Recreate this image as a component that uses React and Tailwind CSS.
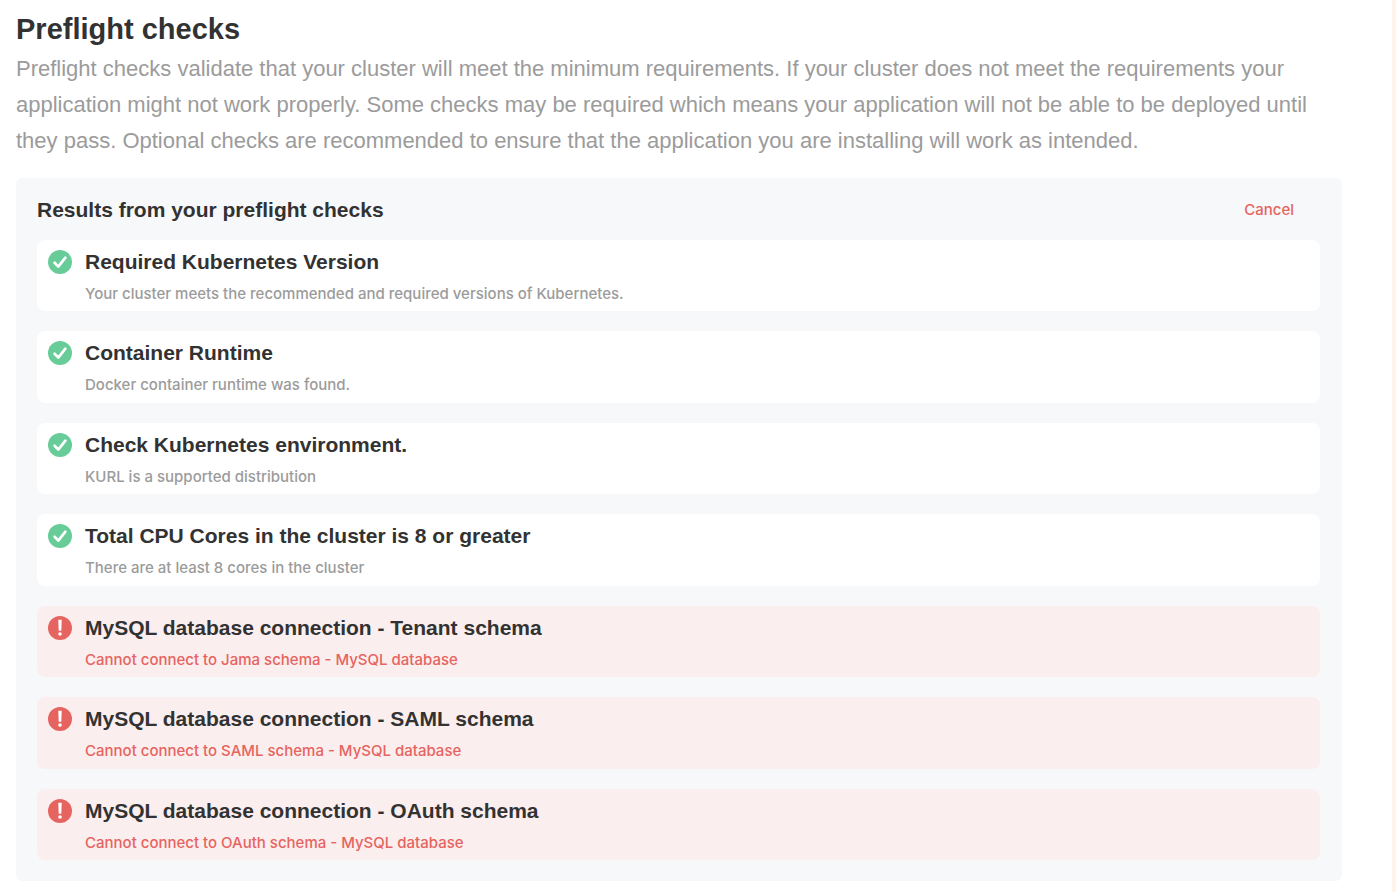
const checks = [
  { title: "Required Kubernetes Version", message: "Your cluster meets the recommended and required versions of Kubernetes.", passed: true },
  { title: "Container Runtime", message: "Docker container runtime was found.", passed: true },
  { title: "Check Kubernetes environment.", message: "KURL is a supported distribution", passed: true },
  { title: "Total CPU Cores in the cluster is 8 or greater", message: "There are at least 8 cores in the cluster", passed: true },
  { title: "MySQL database connection - Tenant schema", message: "Cannot connect to Jama schema - MySQL database", passed: false },
  { title: "MySQL database connection - SAML schema", message: "Cannot connect to SAML schema - MySQL database", passed: false },
  { title: "MySQL database connection - OAuth schema", message: "Cannot connect to OAuth schema - MySQL database", passed: false },
];

function StatusIcon({ passed }) {
  return passed ? (
    <svg className="mt-[10px] size-6 shrink-0" viewBox="0 0 24 24" role="img" aria-label="Passed">
      <circle cx="12" cy="12" r="12" fill="#68cc98" />
      <path d="M6.6 12.8 10.3 16.6 17.4 7.7" fill="none" stroke="#fff" strokeWidth="2.7" strokeLinecap="round" strokeLinejoin="round" />
    </svg>
  ) : (
    <svg className="mt-[10px] size-6 shrink-0" viewBox="0 0 24 24" role="img" aria-label="Failed">
      <circle cx="12" cy="12" r="12" fill="#e66460" />
      <path d="M10.3 3.8h3.4l-.4 11h-2.6z" fill="#fff" />
      <circle cx="12" cy="18" r="1.8" fill="#fff" />
    </svg>
  );
}

function CheckRow({ title, message, passed }) {
  return (
    <li className={`flex gap-[13px] rounded-lg px-[11px] ${passed ? "bg-white" : "bg-[#fbeeee]"}`}>
      <StatusIcon passed={passed} />
      <div className="pt-[9px]">
        <h3 className="text-[21px] leading-[26px] font-bold text-[#323232]">{title}</h3>
        <p className={`mt-2 font-['Inter','Liberation_Sans',sans-serif] text-[15px] leading-[22px] font-medium ${passed ? "text-[#9b9b9b]" : "text-[#e66460]"}`}>{message}</p>
      </div>
    </li>
  );
}

export default function App() {
  return (
    <main className="min-h-screen border-r-4 border-[#fff4ea] bg-white pt-3 pr-[50px] pb-[11px] pl-4 font-['Liberation_Sans',Arial,sans-serif]">
      <h1 className="text-[29px] leading-[34px] font-bold text-[#323232]">Preflight checks</h1>
      <p className="mt-[5px] text-[22px] leading-9 text-[#9b9b9b]">
        Preflight checks validate that your cluster will meet the minimum requirements. If your cluster does not meet the requirements your application might not work properly. Some checks may be required which means your application will not be able to be deployed until they pass. Optional checks are recommended to ensure that the application you are installing will work as intended.
      </p>
      <section className="mt-[19px] rounded-md bg-[#f7f8fa] pt-[19px] pr-[22px] pb-[21px] pl-[21px]">
        <div className="flex items-center justify-between pr-[26px]">
          <h2 className="text-[21px] leading-[26px] font-bold text-[#323232]">Results from your preflight checks</h2>
          <button type="button" className="cursor-pointer font-['Inter','Liberation_Sans',sans-serif] text-[15px] leading-[22px] font-medium text-[#e66460]">Cancel</button>
        </div>
        <ul className="mt-[17px] grid h-[620px] auto-rows-fr gap-5">
          {checks.map((check) => (
            <CheckRow key={check.title} {...check} />
          ))}
        </ul>
      </section>
    </main>
  );
}
